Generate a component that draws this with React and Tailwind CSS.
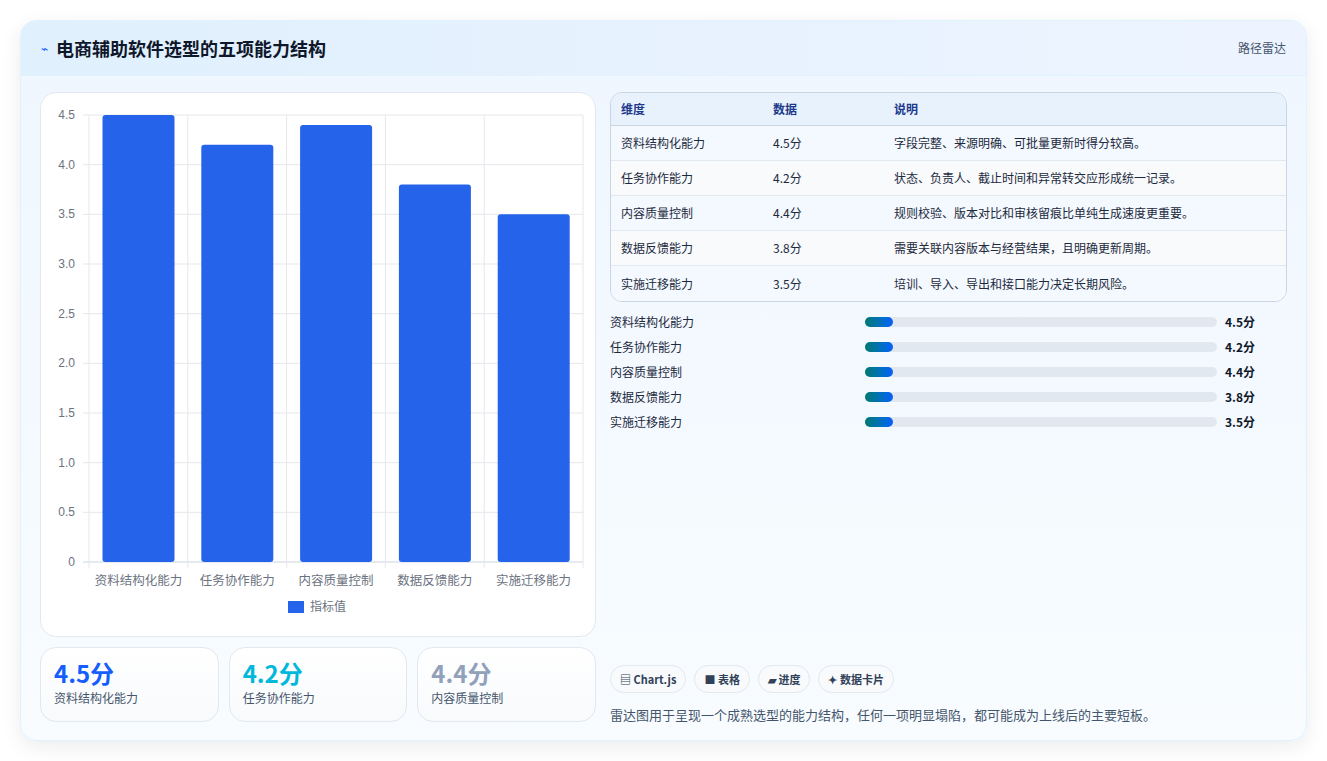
import React from 'react';

const rows = [
  { name: '资料结构化能力', v: 4.5, note: '字段完整、来源明确、可批量更新时得分较高。' },
  { name: '任务协作能力', v: 4.2, note: '状态、负责人、截止时间和异常转交应形成统一记录。' },
  { name: '内容质量控制', v: 4.4, note: '规则校验、版本对比和审核留痕比单纯生成速度更重要。' },
  { name: '数据反馈能力', v: 3.8, note: '需要关联内容版本与经营结果，且明确更新周期。' },
  { name: '实施迁移能力', v: 3.5, note: '培训、导入、导出和接口能力决定长期风险。' },
];

function Chart() {
  const x0 = 48, x1 = 542, y0 = 22, y1 = 469;
  const h = y1 - y0;
  const cw = (x1 - x0) / 5;
  const ticks = [0, 0.5, 1, 1.5, 2, 2.5, 3, 3.5, 4, 4.5];
  return (
    <svg width="555" height="544" className="block" style={{ fontFamily: '"Liberation Sans", "Noto Sans CJK SC", sans-serif' }}>
      {ticks.map((t) => {
        const y = y1 - (t / 4.5) * h;
        return (
          <g key={t}>
            <line x1={x0 - 6} x2={x1} y1={y} y2={y} stroke={t === 0 ? '#cbd5e1' : '#e5e7eb'} />
            <text x={x0 - 14} y={y + 4} fontSize="12" fill="#6b7280" textAnchor="end">{t === 0 ? '0' : t.toFixed(1)}</text>
          </g>
        );
      })}
      {[0, 1, 2, 3, 4, 5].map((i) => (
        <line key={i} x1={x0 + i * cw} x2={x0 + i * cw} y1={y0} y2={y1 + 6} stroke="#e5e7eb" />
      ))}
      {rows.map((r, i) => {
        const bh = (r.v / 4.5) * h;
        return (
          <g key={r.name}>
            <rect x={x0 + i * cw + 13.5} y={y1 - bh} width="72" height={bh} rx="3" fill="#2563eb" />
            <text x={x0 + i * cw + cw / 2} y={y1 + 23} fontSize="12.5" fill="#6b7280" textAnchor="middle">{r.name}</text>
          </g>
        );
      })}
      <rect x="247" y="508" width="16" height="12" fill="#2563eb" />
      <text x="269" y="518" fontSize="12" fill="#6b7280">指标值</text>
    </svg>
  );
}

export default function App() {
  return (
    <div className="min-h-screen bg-white p-5" style={{ fontFamily: '"Noto Sans CJK SC", "Noto Sans", sans-serif' }}>
      <div className="w-[1287px] h-[721px] rounded-2xl border border-sky-100 shadow-[0_6px_20px_rgba(15,23,42,0.08)] bg-gradient-to-b from-[#eff6ff] to-[#f8fcff] overflow-hidden flex flex-col">
        <div className="h-[55px] flex items-center justify-between px-5 bg-gradient-to-r from-[#e0f0fd] to-[#edf4ff] border-b border-sky-100">
          <div className="flex items-center gap-2">
            <span className="text-blue-600 text-xs">⌁</span>
            <h1 className="text-[18px] font-bold text-slate-900">电商辅助软件选型的五项能力结构</h1>
          </div>
          <span className="text-xs text-slate-600">路径雷达</span>
        </div>
        <div className="flex gap-[14px] px-[19px] pt-[16px]">
          <div className="w-[556px] flex flex-col gap-[10px]">
            <div className="h-[545px] bg-white rounded-2xl border border-slate-200 overflow-hidden">
              <Chart />
            </div>
            <div className="grid grid-cols-3 gap-[10px]">
              {[
                ['4.5分', '资料结构化能力', 'text-blue-600'],
                ['4.2分', '任务协作能力', 'text-cyan-500'],
                ['4.4分', '内容质量控制', 'text-slate-400'],
              ].map(([v, l, c]) => (
                <div key={l} className="h-[75px] rounded-2xl border border-slate-200 bg-gradient-to-b from-white to-[#f8fafc] px-[13px] pt-[10px]">
                  <div className={`text-[24px] leading-[30px] font-bold ${c}`}>{v}</div>
                  <div className="text-xs text-slate-600 mt-[2px]">{l}</div>
                </div>
              ))}
            </div>
          </div>
          <div className="flex-1 flex flex-col pr-[0px]">
            <div className="rounded-xl border border-slate-300 overflow-hidden text-xs">
              <div className="h-[33px] flex items-center bg-[#e8f2fd] text-[#1e3a8a] font-bold border-b border-slate-300">
                <div className="w-[162px] pl-[10px]">维度</div>
                <div className="w-[121px]">数据</div>
                <div>说明</div>
              </div>
              {rows.map((r, i) => (
                <div key={r.name} className={`h-[35px] flex items-center text-slate-800 ${i < 4 ? 'border-b border-slate-200' : ''} ${i % 2 ? 'bg-[#f8fafc]' : 'bg-[#f3f9fe]'}`}>
                  <div className="w-[162px] pl-[10px]">{r.name}</div>
                  <div className="w-[121px]">{r.v}分</div>
                  <div>{r.note}</div>
                </div>
              ))}
            </div>
            <div className="flex flex-col gap-[7px] mt-[11px]">
              {rows.map((r) => (
                <div key={r.name} className="h-[18px] flex items-center text-xs text-slate-800">
                  <div className="w-[255px]">{r.name}</div>
                  <div className="w-[352px] h-[10px] rounded-full bg-slate-200">
                    <div className="w-[28px] h-full rounded-full bg-gradient-to-r from-teal-700 to-blue-600" />
                  </div>
                  <div className="ml-[8px] font-bold text-slate-900">{r.v}分</div>
                </div>
              ))}
            </div>
            <div className="mt-[234px] flex gap-[8px]">
              {['▤ Chart.js', '■ 表格', '▰ 进度', '✦ 数据卡片'].map((t) => (
                <span key={t} className="h-[28px] px-[9px] flex items-center rounded-full border border-slate-200 bg-slate-50 text-[11px] font-bold text-slate-700">{t}</span>
              ))}
            </div>
            <p className="mt-[12px] text-[13px] text-slate-600">雷达图用于呈现一个成熟选型的能力结构，任何一项明显塌陷，都可能成为上线后的主要短板。</p>
          </div>
        </div>
      </div>
    </div>
  );
}
